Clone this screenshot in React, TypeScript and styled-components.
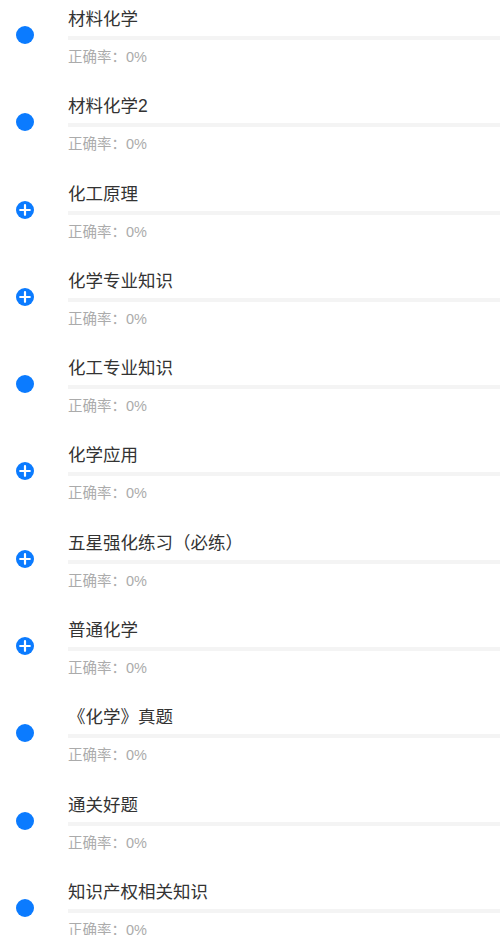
import React from "react";
import styled, { createGlobalStyle } from "styled-components";

const GlobalStyle = createGlobalStyle`
  html, body {
    margin: 0;
    padding: 0;
    background: #ffffff;
  }
  body {
    font-family: "Liberation Sans", "Noto Sans CJK SC", sans-serif;
    -webkit-font-smoothing: antialiased;
  }
`;

const chapters = [
  { name: "材料化学", expandable: false },
  { name: "材料化学2", expandable: false },
  { name: "化工原理", expandable: true },
  { name: "化学专业知识", expandable: true },
  { name: "化工专业知识", expandable: false },
  { name: "化学应用", expandable: true },
  { name: "五星强化练习（必练）", expandable: true },
  { name: "普通化学", expandable: true },
  { name: "《化学》真题", expandable: false },
  { name: "通关好题", expandable: false },
  { name: "知识产权相关知识", expandable: false },
];

const List = styled.div`
  display: flex;
  flex-direction: column;
  width: 100%;
  overflow: hidden;
`;

const Row = styled.div`
  display: flex;
  height: 87.3px;
  flex-shrink: 0;
`;

const Side = styled.div`
  width: 68px;
  flex-shrink: 0;
  display: flex;
  justify-content: flex-start;
  padding-top: 26px;
  padding-left: 16px;
  box-sizing: border-box;
`;

const Dot = styled.div`
  width: 18px;
  height: 18px;
  border-radius: 50%;
  background: #0b7bff;
  display: flex;
  align-items: center;
  justify-content: center;
`;

const Body = styled.div`
  flex: 1;
  display: flex;
  flex-direction: column;
  padding-top: 7px;
`;

const Title = styled.div`
  font-size: 17.5px;
  line-height: 24px;
  color: #333333;
  white-space: nowrap;
`;

const Track = styled.div`
  height: 4px;
  margin-top: 5px;
  background: #f4f4f4;
`;

const Accuracy = styled.div`
  margin-top: 7px;
  font-size: 14.5px;
  line-height: 20px;
  color: #ababab;
`;

const PlusIcon = () => (
  <svg width="18" height="18" viewBox="0 0 18 18">
    <path d="M9 4.2v9.6M4.2 9h9.6" stroke="#ffffff" strokeWidth="2.2" strokeLinecap="round" />
  </svg>
);

export default function App() {
  return (
    <>
      <GlobalStyle />
      <List>
        {chapters.map((c) => (
          <Row key={c.name}>
            <Side>
              <Dot>{c.expandable ? <PlusIcon /> : null}</Dot>
            </Side>
            <Body>
              <Title>{c.name}</Title>
              <Track />
              <Accuracy>正确率：0%</Accuracy>
            </Body>
          </Row>
        ))}
      </List>
    </>
  );
}
